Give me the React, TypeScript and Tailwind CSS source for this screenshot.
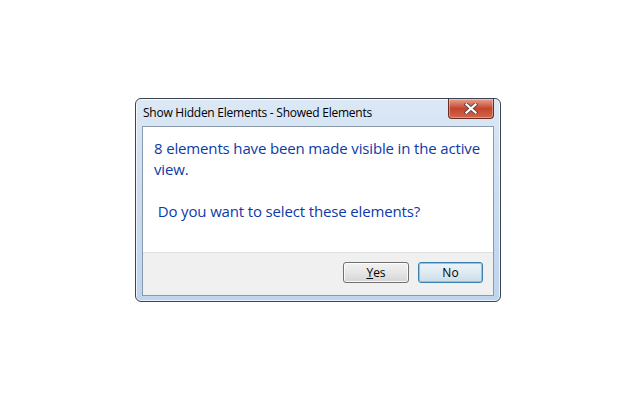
import React from "react";

export default function App() {
  return (
    <div className="w-[636px] h-[400px] bg-white pt-[98px] pl-[135px]" style={{ fontFamily: '"Open Sans", "Noto Sans", sans-serif' }}>
      <div className="w-[366px] h-[204px] rounded-[6px] border border-[#3b4450] bg-gradient-to-b from-[#dce8f5] via-[#c9dcf0] to-[#bfd5ee] shadow-[inset_0_0_0_1px_rgba(255,255,255,0.7)] flex flex-col">
        <div className="h-[27px] flex items-start justify-between pl-[7px] pr-[6px]">
          <div className="text-[12px] leading-[16px] text-black pt-[6px] tracking-[-0.25px] whitespace-nowrap">Show Hidden Elements - Showed Elements</div>
          <div className="w-[46px] h-[20px] rounded-b-[4px] border border-t-0 border-[#6b2b22] bg-gradient-to-b from-[#e6a292] via-[#c4442c] to-[#d2664b] flex items-center justify-center shadow-[inset_0_0_0_1px_rgba(255,255,255,0.35)]">
            <svg width="14" height="11" viewBox="0 0 14 11">
              <path d="M2.5 1.5 L11.5 9.5 M11.5 1.5 L2.5 9.5" stroke="#5a4a4a" strokeWidth="4" strokeLinecap="square" />
              <path d="M2.5 1.5 L11.5 9.5 M11.5 1.5 L2.5 9.5" stroke="#ffffff" strokeWidth="2.2" strokeLinecap="square" />
            </svg>
          </div>
        </div>
        <div className="mx-[6px] border border-[#8b9aab] bg-white flex flex-col h-[170px]">
          <div className="h-[125px] pl-[11px] pt-[11px] text-[15px] leading-[21px] text-[#0d3aa8] whitespace-nowrap tracking-[-0.15px]">
            <div>8 elements have been made visible in the active</div>
            <div>view.</div>
            <div>&nbsp;</div>
            <div>&nbsp;Do you want to select these elements?</div>
          </div>
          <div className="flex-1 bg-[#f0f0f0] border-t border-[#dfdfdf] flex justify-end items-start pt-[9px] pr-[10px] gap-[9px]">
            <button className="w-[66px] h-[21px] rounded-[3px] border border-[#707070] bg-gradient-to-b from-[#f2f2f2] via-[#e6e6e6] to-[#d4d4d4] text-[12px] leading-[16px] text-black shadow-[inset_0_0_0_1px_rgba(255,255,255,0.8)]">
              <span className="underline">Y</span>es
            </button>
            <button className="w-[65px] h-[21px] rounded-[3px] border border-[#3c7fb1] bg-gradient-to-b from-[#eaf3f8] via-[#dfeaf2] to-[#cbdce8] text-[12px] leading-[16px] text-black shadow-[inset_0_0_0_1px_#6fd0f5]">
              No
            </button>
          </div>
        </div>
      </div>
    </div>
  );
}
